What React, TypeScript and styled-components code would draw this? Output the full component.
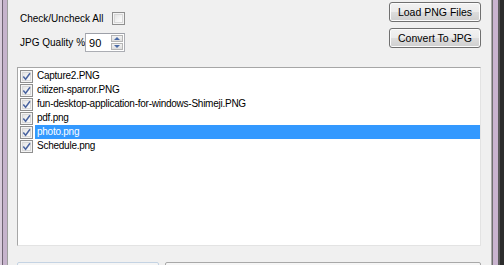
import React, { useState } from 'react';
import styled, { createGlobalStyle } from 'styled-components';

const GlobalStyle = createGlobalStyle`
  html, body {
    margin: 0;
    padding: 0;
    width: 504px;
    height: 265px;
    overflow: hidden;
    background: #f0f0f0;
  }
  * {
    box-sizing: border-box;
  }
`;

const Window = styled.div`
  display: flex;
  width: 504px;
  height: 265px;
  font-family: "Liberation Sans", Arial, sans-serif;
  font-size: 10px;
  color: #000;
`;

const LeftFrame = styled.div`
  width: 8px;
  flex-shrink: 0;
  background: linear-gradient(
    to right,
    #d9ccdc 0px, #d9ccdc 2px,
    #6e6372 2px, #6e6372 3px,
    #c6b3cc 3px, #c6b3cc 7px,
    #9d9d9d 7px, #9d9d9d 8px
  );
`;

const RightFrame = styled.div`
  width: 13px;
  flex-shrink: 0;
  background: linear-gradient(
    to right,
    #a9a9a9 0px, #a9a9a9 1px,
    #6f6f6f 1px, #6f6f6f 2px,
    #c9b4cf 2px, #c9b4cf 7px,
    #5a5a5a 7px, #5a5a5a 9px,
    #2c2c2c 9px, #2c2c2c 13px
  );
`;

const Client = styled.div`
  flex: 1;
  display: flex;
  flex-direction: column;
  padding: 2px 10px 0 9px;
  background: #f0f0f0;
  overflow: hidden;
  > * {
    flex-shrink: 0;
  }
`;

const TopArea = styled.div`
  display: flex;
  justify-content: space-between;
  height: 65px;
`;

const Options = styled.div`
  display: flex;
  flex-direction: column;
  padding-left: 3px;
`;

const OptionRow = styled.div<{ $top: number }>`
  display: flex;
  align-items: center;
  height: 20px;
  margin-top: ${p => p.$top}px;
`;

const Label = styled.span<{ $gap: number }>`
  margin-right: ${p => p.$gap}px;
  white-space: nowrap;
`;

const Check = styled.span`
  position: relative;
  display: inline-block;
  width: 13px;
  height: 13px;
  border: 1px solid #8f8f8f;
  background: linear-gradient(135deg, #dcdcdc 0%, #f6f6f6 60%, #ffffff 100%);
  box-shadow: inset 0 0 0 1px #f4f4f4, inset 0 0 0 2px #d8d8d8;
  flex-shrink: 0;
`;

const Tick = styled.svg`
  position: absolute;
  left: 1px;
  top: 1px;
`;

const CheckBox = ({ checked }: { checked?: boolean }) => (
  <Check>
    {checked && (
      <Tick width="9" height="9" viewBox="0 0 9 9">
        <path d="M1.3 4.5 L3.6 7.2 L8 1.3" fill="none" stroke="#4a64a0" strokeWidth="1.5" />
      </Tick>
    )}
  </Check>
);

const SpinBox = styled.div`
  display: flex;
  width: 40px;
  height: 19px;
  border: 1px solid #abadb3;
  border-top-color: #9da0a8;
  background: #fff;
`;

const SpinValue = styled.span`
  flex: 1;
  padding: 3px 0 0 3px;
  font-size: 11px;
`;

const SpinButtons = styled.div`
  display: flex;
  flex-direction: column;
  width: 12px;
  margin: 1px 1px 1px 0;
  gap: 1px;
`;

const SpinButton = styled.div`
  flex: 1;
  display: flex;
  align-items: center;
  justify-content: center;
  border: 1px solid #b5b5b5;
  background: linear-gradient(#f3f3f3, #dedede);
`;

const Arrow = styled.span<{ $up?: boolean }>`
  width: 0;
  height: 0;
  border-left: 3px solid transparent;
  border-right: 3px solid transparent;
  ${p => (p.$up ? 'border-bottom: 3px solid #4a6aa5;' : 'border-top: 3px solid #4a6aa5;')}
`;

const Buttons = styled.div`
  display: flex;
  flex-direction: column;
  gap: 6px;
`;

const Button = styled.button`
  width: 92px;
  height: 20px;
  padding: 0;
  border: 1px solid #707070;
  border-radius: 3px;
  background: linear-gradient(#f2f2f2 0%, #ebebeb 50%, #dddddd 50%, #cfcfcf 100%);
  box-shadow: inset 0 0 0 1px #fcfcfc;
  font-family: "Liberation Sans", Arial, sans-serif;
  font-size: 10.5px;
  color: #000;
`;

const FileList = styled.div`
  height: 179px;
  border: 1px solid #e3e3e3;
  border-top-color: #a6a6a6;
  border-left-color: #a6a6a6;
  background: #fff;
  padding-top: 1px;
`;

const Item = styled.div`
  display: flex;
  align-items: center;
  height: 14px;
  padding-left: 2px;
`;

const ItemText = styled.span<{ $selected?: boolean }>`
  flex: 1;
  height: 14px;
  line-height: 14px;
  margin-left: 2px;
  padding-left: 2px;
  white-space: nowrap;
  letter-spacing: -0.25px;
  background: ${p => (p.$selected ? '#3399ff' : 'transparent')};
  color: ${p => (p.$selected ? '#fff' : '#000')};
`;

const BottomRow = styled.div`
  display: flex;
  gap: 6px;
  margin-top: 16px;
`;

const Field = styled.div<{ $width: number; $tone: string }>`
  width: ${p => p.$width}px;
  height: 20px;
  flex-shrink: 0;
  border: 1px solid ${p => p.$tone};
  border-radius: 2px;
  background: #f6f6f6;
`;

const files = [
  'Capture2.PNG',
  'citizen-sparror.PNG',
  'fun-desktop-application-for-windows-Shimeji.PNG',
  'pdf.png',
  'photo.png',
  'Schedule.png',
];

export default function App() {
  const [selected] = useState(4);

  return (
    <>
      <GlobalStyle />
      <Window>
        <LeftFrame />
        <Client>
          <TopArea>
            <Options>
              <OptionRow $top={6}>
                <Label $gap={9}>Check/Uncheck All</Label>
                <CheckBox />
              </OptionRow>
              <OptionRow $top={4}>
                <Label $gap={0}>JPG Quality %</Label>
                <SpinBox>
                  <SpinValue>90</SpinValue>
                  <SpinButtons>
                    <SpinButton><Arrow $up /></SpinButton>
                    <SpinButton><Arrow /></SpinButton>
                  </SpinButtons>
                </SpinBox>
              </OptionRow>
            </Options>
            <Buttons>
              <Button>Load PNG Files</Button>
              <Button>Convert To JPG</Button>
            </Buttons>
          </TopArea>
          <FileList>
            {files.map((name, i) => (
              <Item key={name}>
                <CheckBox checked />
                <ItemText $selected={i === selected}>{name}</ItemText>
              </Item>
            ))}
          </FileList>
          <BottomRow>
            <Field $width={142} $tone="#c4d3e3" />
            <Field $width={316} $tone="#a8a8a8" />
          </BottomRow>
        </Client>
        <RightFrame />
      </Window>
    </>
  );
}
